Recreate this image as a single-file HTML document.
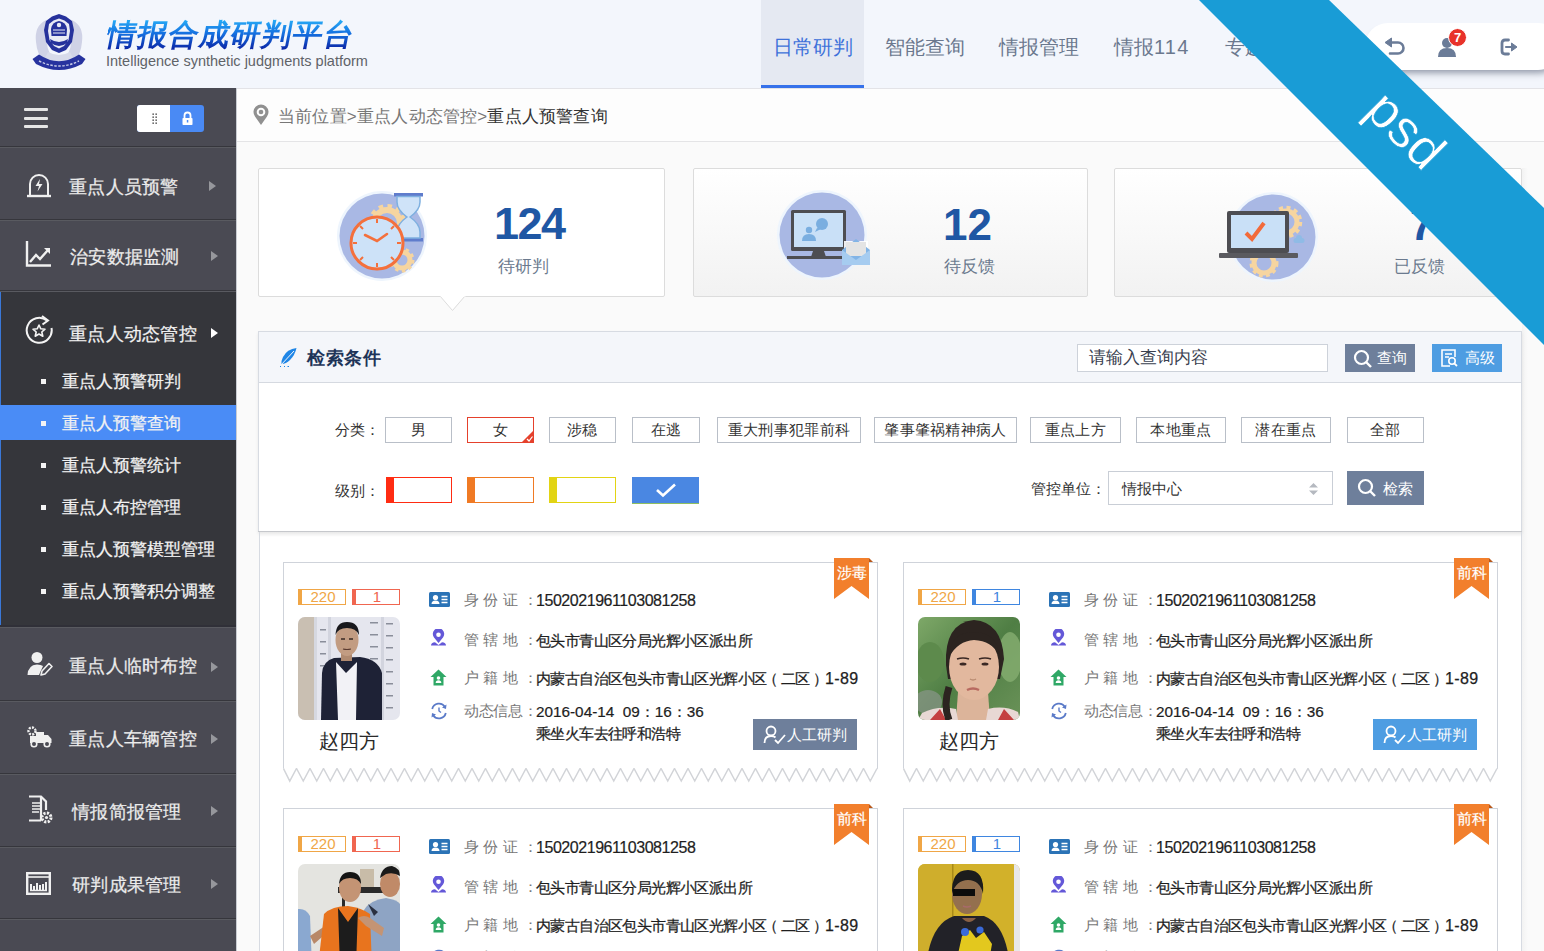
<!DOCTYPE html>
<html><head><meta charset="utf-8">
<style>
*{margin:0;padding:0;box-sizing:border-box}
html,body{width:1544px;height:951px;overflow:hidden;background:#fafafa;font-family:"Liberation Sans",sans-serif;position:relative}
.a{position:absolute}
.t{position:absolute;white-space:nowrap;line-height:20px}
/* header */
#hdr{left:0;top:0;width:1544px;height:89px;background:#f3f6fc;border-bottom:1px solid #e3e3e7}
.tab{position:absolute;top:0;height:88px}
.tabtxt{font-size:20px;color:#6b788e}
/* sidebar */
#side{left:0;top:88px;width:236px;height:863px;background:#4a4a53}
.sep{position:absolute;left:0;width:236px;height:2px;border-top:1px solid #36363c;border-bottom:1px solid #595a60}
.mtxt{font-size:18px;letter-spacing:0.3px;color:#ececec;-webkit-text-stroke:0.25px #ececec}
.stxt{font-size:17px;color:#f2f2f2;-webkit-text-stroke:0.25px #f2f2f2}
.arr{position:absolute;width:0;height:0;border-top:5.5px solid transparent;border-bottom:5.5px solid transparent;border-left:7px solid #96979c}
.bul{position:absolute;left:41px;width:5px;height:5px;background:#f4f4f4}
</style></head><body>

<!-- HEADER -->
<div id="hdr" class="a"></div>
<svg class="a" style="left:30px;top:12px" width="58" height="60" viewBox="0 0 58 60">
  <path d="M6 30 Q4 14 16 8 L20 20 Q14 30 20 42 L14 50 Q7 42 6 30 Z" fill="#cfd2e6"/>
  <path d="M52 30 Q54 14 42 8 L38 20 Q44 30 38 42 L44 50 Q51 42 52 30 Z" fill="#cfd2e6"/>
  <path d="M14 48 Q29 58 44 48 L40 40 Q29 46 18 40 Z" fill="#d8dbea"/>
  <path d="M29 2 L36 4.5 L42 9 L44 18 L42 30 L36 38 L29 41 L22 38 L16 30 L14 18 L16 9 L22 4.5 Z" fill="#26329c"/>
  <path d="M29 6.5 L34.5 8.5 L39 12 L40 19 L38.5 28 L34 34 L29 36.5 L24 34 L19.5 28 L18 19 L19 12 L23.5 8.5 Z" fill="#e9ebf5"/>
  <path d="M29 9 Q36 10 37 17 L36.5 24 L21.5 24 L21 17 Q22 10 29 9 Z" fill="#26329c"/>
  <circle cx="29" cy="13" r="2.2" fill="#e9ebf5"/>
  <path d="M23 18 H35 M23 21 H35" stroke="#e9ebf5" stroke-width="1"/>
  <path d="M20 27 Q29 33 38 27 L37 31 Q29 37 21 31 Z" fill="#26329c"/>
  <path d="M2.5 47 L9 42.5 Q29 56 49 42.5 L55.5 47 L52 52 Q29 64 6 52 Z" fill="#27339f"/>
  <path d="M9 49 Q29 59 49 49" stroke="#c5c9e6" stroke-width="1.4" fill="none" stroke-dasharray="2.5 1.5"/>
</svg>
<div class="t" style="left:104px;top:19px;font-size:30px;line-height:32px;font-weight:bold;transform:skewX(-11deg);transform-origin:0 100%;background:linear-gradient(#28b0f8 0%,#1570e0 45%,#0a1ea0 100%);-webkit-background-clip:text;background-clip:text;color:transparent;letter-spacing:1px">情报合成研判平台</div>
<div class="t" style="left:106px;top:52px;font-size:14.5px;line-height:18px;color:#5f6368">Intelligence synthetic judgments platform</div>

<div class="a" style="left:761px;top:0;width:103px;height:88px;background:#e5e9f2"></div>
<div class="a" style="left:761px;top:85px;width:103px;height:3px;background:#3671ea"></div>
<div class="t tabtxt" style="left:773px;top:37px;color:#3e72da">日常研判</div>
<div class="t tabtxt" style="left:885px;top:37px">智能查询</div>
<div class="t tabtxt" style="left:999px;top:37px">情报管理</div>
<div class="t tabtxt" style="left:1114px;top:37px">情报<span style="letter-spacing:1.2px">114</span></div>
<div class="t tabtxt" style="left:1225px;top:37px">专题研判</div>

<div class="a" style="left:1365px;top:23px;width:196px;height:46.5px;background:#fff;border-radius:23px;box-shadow:0 6px 7px -3px rgba(50,60,85,.5)"></div>
<svg class="a" style="left:1384px;top:37px" width="22" height="18" viewBox="0 0 22 18"><path d="M6 5.5 H14 A5.5 5.5 0 0 1 14 16.5 H6" stroke="#6b7c98" stroke-width="2.6" fill="none" stroke-linecap="round"/><path d="M1 5.5 L7.5 1 L7.5 10 Z" fill="#6b7c98" stroke="#6b7c98" stroke-width="1" stroke-linejoin="round"/></svg>
<svg class="a" style="left:1437px;top:36px" width="22" height="22" viewBox="0 0 22 22">
  <circle cx="10" cy="7" r="5" fill="#6b7c98"/>
  <path d="M1 21 Q1 12 10 12 Q19 12 19 21 Z" fill="#6b7c98"/>
</svg>
<div class="a" style="left:1448px;top:28px;width:19px;height:19px;border-radius:50%;background:#e8322a;border:1.5px solid #fff"></div>
<div class="t" style="left:1448px;top:28px;width:19px;font-size:13px;line-height:19px;text-align:center;color:#fff;font-weight:bold">7</div>
<svg class="a" style="left:1500px;top:38px" width="19" height="18" viewBox="0 0 19 18"><path d="M8.5 2 H5 Q2 2 2 5 V13 Q2 16 5 16 H8.5" stroke="#6b7c98" stroke-width="2.8" fill="none" stroke-linecap="round"/><path d="M6 9 H13" stroke="#6b7c98" stroke-width="2.2" stroke-linecap="round"/><path d="M11.5 5 L17 9 L11.5 13 Z" fill="#6b7c98" stroke="#6b7c98" stroke-width="1" stroke-linejoin="round"/></svg>

<!-- SIDEBAR -->
<div id="side" class="a"></div>
<div class="a" style="left:236px;top:88px;width:1px;height:863px;background:#c9ccd2"></div>
<div class="a" style="left:24px;top:108px;width:24px;height:3px;background:#e6e6e6;border-radius:1px"></div>
<div class="a" style="left:24px;top:117px;width:24px;height:3px;background:#e6e6e6;border-radius:1px"></div>
<div class="a" style="left:24px;top:125px;width:24px;height:3px;background:#e6e6e6;border-radius:1px"></div>
<div class="a" style="left:137px;top:105px;width:67px;height:27px;border-radius:3px;background:#4a8af4;overflow:hidden"><div style="width:33px;height:27px;background:#fff"></div></div>
<svg class="a" style="left:152px;top:113px" width="6" height="12" viewBox="0 0 6 12"><g fill="#222"><rect x="0.5" y="0.5" width="1.3" height="1.3"/><rect x="3.5" y="0.5" width="1.3" height="1.3"/><rect x="0.5" y="3.5" width="1.3" height="1.3"/><rect x="3.5" y="3.5" width="1.3" height="1.3"/><rect x="0.5" y="6.5" width="1.3" height="1.3"/><rect x="3.5" y="6.5" width="1.3" height="1.3"/><rect x="0.5" y="9.5" width="1.3" height="1.3"/><rect x="3.5" y="9.5" width="1.3" height="1.3"/></g></svg>
<svg class="a" style="left:181px;top:111px" width="13" height="15" viewBox="0 0 13 15"><path d="M3.5 7 V4.5 A3 3 0 0 1 9.5 4.5 V7" stroke="#fff" stroke-width="1.8" fill="none"/><rect x="1.5" y="7" width="10" height="7" rx="0.8" fill="#fff"/><rect x="5.8" y="9" width="1.5" height="2.5" fill="#4a8af4"/></svg>

<div class="sep" style="top:146px"></div>
<svg class="a" style="left:25px;top:172px" width="28" height="26" viewBox="0 0 28 26"><path d="M5 23 V12 A9 9 0 0 1 23 12 V23" stroke="#f0f0f0" stroke-width="2" fill="none"/><path d="M2 24 H26" stroke="#f0f0f0" stroke-width="2.4"/><path d="M15 7 L10.5 14 H14 L12.5 19.5 L17.5 12 H14 Z" fill="#f0f0f0"/></svg>
<div class="t mtxt" style="left:69px;top:177px">重点人员预警</div>
<div class="arr" style="left:209px;top:181px"></div>

<div class="sep" style="top:219px"></div>
<svg class="a" style="left:25px;top:240px" width="28" height="27" viewBox="0 0 28 27"><path d="M2 1 V25.5 H26" stroke="#f0f0f0" stroke-width="2.4" fill="none"/><path d="M5 22 L11 15 L15 19 L23 10" stroke="#f0f0f0" stroke-width="2.4" fill="none"/><path d="M19 8 L25 8 L25 14 Z" fill="#f0f0f0"/></svg>
<div class="t mtxt" style="left:70px;top:247px">治安数据监测</div>
<div class="arr" style="left:211px;top:251px"></div>

<div class="sep" style="top:290px"></div>
<div class="a" style="left:0;top:292px;width:236px;height:334px;background:#35363b"></div>
<div class="a" style="left:0;top:292px;width:1px;height:334px;background:#3a78d8"></div>
<svg class="a" style="left:25px;top:314px" width="30" height="31" viewBox="0 0 30 31"><path d="M22 6.5 A12.5 12.5 0 1 0 26.5 14" stroke="#f4f4f4" stroke-width="2" fill="none"/><path d="M17 2 L23 6.5 L17.5 10.5" stroke="#f4f4f4" stroke-width="2" fill="none"/><path d="M14 11 L15.8 14.8 L20 15.2 L16.8 18 L17.8 22.2 L14 20 L10.2 22.2 L11.2 18 L8 15.2 L12.2 14.8 Z" stroke="#f4f4f4" stroke-width="1.6" fill="none" stroke-linejoin="round"/></svg>
<div class="t mtxt" style="left:69px;top:324px;color:#f4f4f4">重点人动态管控</div>
<div class="arr" style="left:211px;top:328px;border-left-color:#fff"></div>

<div class="bul" style="top:379px"></div>
<div class="t stxt" style="left:62px;top:372px">重点人预警研判</div>
<div class="a" style="left:0;top:405px;width:236px;height:35px;background:#4a8cf6"></div>
<div class="bul" style="top:421px"></div>
<div class="t stxt" style="left:62px;top:414px">重点人预警查询</div>
<div class="bul" style="top:463px"></div>
<div class="t stxt" style="left:62px;top:456px">重点人预警统计</div>
<div class="bul" style="top:505px"></div>
<div class="t stxt" style="left:62px;top:498px">重点人布控管理</div>
<div class="bul" style="top:547px"></div>
<div class="t stxt" style="left:62px;top:540px">重点人预警模型管理</div>
<div class="bul" style="top:589px"></div>
<div class="t stxt" style="left:62px;top:582px">重点人预警积分调整</div>

<div class="sep" style="top:625px;height:3px;border-top:2px solid #303038"></div>
<svg class="a" style="left:27px;top:651px" width="26" height="26" viewBox="0 0 26 26"><circle cx="10" cy="6.5" r="5.5" fill="#f0f0f0"/><path d="M0.5 24 Q1 14 10 13.5 Q14 13.5 16 15 L12 24 Z" fill="#f0f0f0"/><path d="M14 24 L15 20 L22 12.5 L25 15.5 L18 23 Z" stroke="#f0f0f0" stroke-width="1.6" fill="none" stroke-linejoin="round"/></svg>
<div class="t mtxt" style="left:69px;top:656px">重点人临时布控</div>
<div class="arr" style="left:211px;top:662px"></div>

<div class="sep" style="top:700px"></div>
<svg class="a" style="left:27px;top:726px" width="26" height="22" viewBox="0 0 26 22"><circle cx="5" cy="5" r="3.5" stroke="#f0f0f0" stroke-width="2.4" fill="none" stroke-dasharray="2 1.2"/><path d="M9 6 H17 V17 H3 V10 H9 Z" fill="#f0f0f0"/><path d="M17 9 H21 L24.5 13 V17 H17 Z" fill="#f0f0f0"/><circle cx="7" cy="18" r="2.8" fill="#4a4a53" stroke="#f0f0f0" stroke-width="1.6"/><circle cx="20" cy="18" r="2.8" fill="#4a4a53" stroke="#f0f0f0" stroke-width="1.6"/></svg>
<div class="t mtxt" style="left:69px;top:729px">重点人车辆管控</div>
<div class="arr" style="left:211px;top:734px"></div>

<div class="sep" style="top:773px"></div>
<svg class="a" style="left:27px;top:795px" width="27" height="30" viewBox="0 0 27 30"><path d="M2 1.5 H14 L19 6.5 V15 M14 25.5 H2 Z V1.5" stroke="#f0f0f0" stroke-width="2.2" fill="none"/><path d="M5 8 H15 M5 11 H15 M5 14 H15 M5 17 H12" stroke="#f0f0f0" stroke-width="1.4"/><circle cx="19.5" cy="22.5" r="4.5" stroke="#f0f0f0" stroke-width="3" fill="none" stroke-dasharray="2.2 1.3"/><circle cx="19.5" cy="22.5" r="1.6" fill="#f0f0f0"/></svg>
<div class="t mtxt" style="left:72px;top:802px">情报简报管理</div>
<div class="arr" style="left:211px;top:806px"></div>

<div class="sep" style="top:846px"></div>
<svg class="a" style="left:26px;top:872px" width="25" height="23" viewBox="0 0 25 23"><rect x="1.2" y="1.2" width="22.6" height="20.6" stroke="#f0f0f0" stroke-width="2.4" fill="none"/><path d="M1 5 H24" stroke="#f0f0f0" stroke-width="1.6"/><path d="M5 18 V12 M8 18 V14 M11 18 V11 M14 18 V13 M17 18 V12 M20 18 V10" stroke="#f0f0f0" stroke-width="2"/><path d="M4 18.5 H21" stroke="#f0f0f0" stroke-width="1.5"/></svg>
<div class="t mtxt" style="left:72px;top:875px">研判成果管理</div>
<div class="arr" style="left:211px;top:879px"></div>
<div class="sep" style="top:918px"></div>


<!-- CONTENT -->
<div class="a" style="left:237px;top:89px;width:1307px;height:53px;background:#fdfdfd;border-bottom:1px solid #e4e4e6"></div>
<svg class="a" style="left:252px;top:104px" width="18" height="22" viewBox="0 0 18 22"><path d="M9 21 L3 12.5 A7.5 7.5 0 1 1 15 12.5 Z" fill="#909090"/><circle cx="9" cy="8" r="4.3" fill="#fdfdfd"/><circle cx="9" cy="8" r="2.3" fill="#909090"/></svg>
<div class="t" style="left:278px;top:107px;font-size:17px;color:#777;letter-spacing:0.2px">当前位置&gt;重点人动态管控&gt;<span style="color:#333">重点人预警查询</span></div>

<!-- stat cards -->
<div class="a" style="left:258px;top:168px;width:407px;height:129px;background:#fff;border:1px solid #dcdcdc;border-radius:2px"></div>
<svg class="a" style="left:440px;top:295px" width="26" height="17" viewBox="0 0 26 17"><path d="M0 1 L12.5 15.5 L25 1" fill="#fff" stroke="#dcdcdc" stroke-width="1"/><rect x="0.5" y="0" width="25" height="1.6" fill="#fff"/></svg>
<div class="a" style="left:693px;top:168px;width:395px;height:129px;background:linear-gradient(#fff,#f2f2f2);border:1px solid #dcdcdc;border-radius:2px"></div>
<div class="a" style="left:1114px;top:168px;width:408px;height:129px;background:linear-gradient(#fff,#f2f2f2);border:1px solid #dcdcdc;border-radius:2px"></div>

<!-- icon 1: clock -->
<svg class="a" style="left:334px;top:188px" width="96" height="96" viewBox="0 0 96 96">
  <circle cx="48" cy="48" r="45" fill="#eef5fd"/>
  <circle cx="48" cy="48" r="42.5" fill="#a9b8e4"/>
  <circle cx="53" cy="35" r="13" fill="none" stroke="#f6d5a0" stroke-width="6"/>
  <circle cx="53" cy="35" r="17" fill="none" stroke="#f6d5a0" stroke-width="4" stroke-dasharray="4.5 4.4"/>
  <circle cx="68" cy="72" r="8" fill="none" stroke="#f6d5a0" stroke-width="5"/>
  <circle cx="68" cy="72" r="11" fill="none" stroke="#f6d5a0" stroke-width="3" stroke-dasharray="3.5 3.4"/>
  <rect x="60" y="5" width="29" height="3.5" fill="#5f7ccc"/>
  <rect x="60" y="50" width="29" height="3.5" fill="#5f7ccc"/>
  <path d="M63 8.5 H86 V14 Q86 22 76 29 Q86 36 86 44 V50 H63 V44 Q63 36 73 29 Q63 22 63 14 Z" fill="#cfe3f8" stroke="#7fb0e0" stroke-width="1.5"/>
  <circle cx="43" cy="55" r="26" fill="#cde2f8" stroke="#f4703c" stroke-width="3"/>
  <g stroke="#f4703c" stroke-width="2">
    <path d="M43 31 V35 M43 75 V79 M19 55 H23 M63 55 H67 M26 38 L29 41 M60 38 L57 41 M26 72 L29 69 M60 72 L57 69"/>
  </g>
  <path d="M31 47 L43 53 L53 46" stroke="#f4703c" stroke-width="2.6" fill="none" stroke-linecap="round"/>
</svg>
<div class="t" style="left:494px;top:202px;font-size:45px;line-height:44px;font-weight:bold;color:#1f57a4;letter-spacing:-1.5px">124</div>
<div class="t" style="left:498px;top:257px;font-size:17px;color:#6b7a8e">待研判</div>

<!-- icon 2: monitor -->
<svg class="a" style="left:776px;top:189px" width="100" height="94" viewBox="0 0 100 94">
  <circle cx="46" cy="46" r="45" fill="#eef5fd"/>
  <circle cx="46" cy="46" r="42.5" fill="#a9b8e4"/>
  <rect x="15" y="21" width="55" height="41" rx="1.5" fill="#4d4d52"/>
  <rect x="18" y="24" width="49" height="34" fill="#c9e0f7"/>
  <path d="M37 62 H48 L50 68 H35 Z" fill="#4d4d52"/>
  <rect x="11" y="67" width="60" height="3" fill="#4d4d52"/>
  <circle cx="46" cy="35" r="6" fill="#7aaee0"/>
  <path d="M41 39 L39 43 L45 40 Z" fill="#7aaee0"/>
  <circle cx="33" cy="41" r="3.2" fill="#7aaee0"/>
  <path d="M26 52 Q26 45 33 45 Q40 45 40 52 Z" fill="#7aaee0"/>
  <rect x="68" y="52" width="24" height="24" fill="#fff" opacity=".9"/>
  <path d="M66 61 L80 50 L94 61 V76 H66 Z" fill="#82b4e6"/>
  <rect x="70" y="53" width="20" height="14" fill="#e4e4e4"/>
  <path d="M66 61 L80 71 L94 61 V76 H66 Z" fill="#a6ccf0"/>
</svg>
<div class="t" style="left:943px;top:203px;font-size:44px;line-height:44px;font-weight:bold;color:#1f57a4">12</div>
<div class="t" style="left:944px;top:257px;font-size:17px;color:#6b7a8e">待反馈</div>

<!-- icon 3: laptop -->
<svg class="a" style="left:1216px;top:191px" width="104" height="94" viewBox="0 0 104 94">
  <circle cx="57" cy="46" r="45" fill="#eef5fd"/>
  <circle cx="57" cy="46" r="42.5" fill="#a9b8e4"/>
  <circle cx="70" cy="31" r="11" fill="none" stroke="#f6d5a0" stroke-width="5"/>
  <circle cx="70" cy="31" r="14.5" fill="none" stroke="#f6d5a0" stroke-width="3.5" stroke-dasharray="4 3.6"/>
  <circle cx="48" cy="72" r="10" fill="none" stroke="#f6d5a0" stroke-width="5"/>
  <circle cx="48" cy="72" r="13" fill="none" stroke="#f6d5a0" stroke-width="3" stroke-dasharray="3.8 3.4"/>
  <rect x="11" y="20" width="62" height="42" rx="2" fill="#4d4d52"/>
  <rect x="15" y="24" width="54" height="33" fill="#c9e0f7"/>
  <rect x="3" y="62" width="79" height="5" rx="1" fill="#5a5a5f"/>
  <path d="M30 42 L36 48 L48 32" stroke="#f26a3a" stroke-width="4" fill="none"/>
  <path d="M80 47 a3 3 0 0 1 6 0 a2.5 2.5 0 0 1 0 5 h-6 a2.5 2.5 0 0 1 0 -5z" fill="#8fbbe6"/>
</svg>
<div class="t" style="left:1410px;top:203px;font-size:44px;line-height:44px;font-weight:bold;color:#1f57a4">7</div>
<div class="t" style="left:1394px;top:257px;font-size:17px;color:#6b7a8e">已反馈</div>


<!-- search panel -->
<div class="a" style="left:258px;top:331px;width:1264px;height:201px;background:#fff;border:1px solid #d7dbe2;box-shadow:0 2px 3px rgba(0,0,0,.08)"></div>
<div class="a" style="left:259px;top:332px;width:1262px;height:51px;background:#f4f6fa;border-bottom:1px solid #d5d9e0"></div>
<svg class="a" style="left:278px;top:347px" width="20" height="21" viewBox="0 0 20 21"><path d="M18.5 1 Q9 2 5 10 Q3 14 3.5 17 Q8 17 12 13 Q17 8 18.5 1 Z" fill="#1f86e6"/><path d="M16 4 L2.5 18.5" stroke="#f4f6fa" stroke-width="1"/><path d="M2 19.5 L3 19.5 M6 19.5 L7 19.5 M9.5 19.5 L11 19.5" stroke="#1f86e6" stroke-width="1"/></svg>
<div class="t" style="left:307px;top:348px;font-size:18px;font-weight:bold;color:#1e3458;letter-spacing:0.6px">检索条件</div>
<div class="a" style="left:1077px;top:344px;width:251px;height:28px;background:#fff;border:1px solid #cdd2da"></div>
<div class="t" style="left:1089px;top:348px;font-size:17px;color:#3a4150">请输入查询内容</div>
<div class="a" style="left:1345px;top:344px;width:70px;height:28px;background:#6e7f9b"></div>
<svg class="a" style="left:1353px;top:349px" width="20" height="20" viewBox="0 0 20 20"><circle cx="8.5" cy="8.5" r="6.5" stroke="#fff" stroke-width="2.2" fill="none"/><path d="M13 13 L18 18" stroke="#fff" stroke-width="2.4"/></svg>
<div class="t" style="left:1377px;top:348px;font-size:15px;color:#fff">查询</div>
<div class="a" style="left:1432px;top:344px;width:70px;height:28px;background:#4e9de2"></div>
<svg class="a" style="left:1440px;top:348px" width="19" height="20" viewBox="0 0 19 20"><path d="M10 18 H2 V2 H15 V9" stroke="#fff" stroke-width="1.6" fill="none"/><path d="M5 6 H12 M5 9 H9" stroke="#fff" stroke-width="1.4"/><circle cx="12" cy="13" r="3.2" stroke="#fff" stroke-width="1.6" fill="none"/><path d="M14.3 15.3 L17 18" stroke="#fff" stroke-width="1.8"/></svg>
<div class="t" style="left:1465px;top:348px;font-size:15px;color:#fff">高级</div>

<div class="t" style="left:335px;top:420px;font-size:15px;color:#333">分类：</div>
<div class="t" style="left:335px;top:481px;font-size:15px;color:#333">级别：</div>
<div class="a" style="left:385px;top:417px;width:67px;height:26px;border:1px solid #b9bfc8;background:#fff"></div>
<div class="t" style="left:385px;top:420px;width:67px;text-align:center;font-size:15px;color:#333;letter-spacing:0.3px">男</div>
<div class="a" style="left:467px;top:417px;width:67px;height:26px;border:1px solid #e5412c;background:#fff"></div>
<div class="t" style="left:467px;top:420px;width:67px;text-align:center;font-size:15px;color:#333;letter-spacing:0.3px">女</div>
<div class="a" style="left:549px;top:417px;width:67px;height:26px;border:1px solid #b9bfc8;background:#fff"></div>
<div class="t" style="left:549px;top:420px;width:67px;text-align:center;font-size:15px;color:#333;letter-spacing:0.3px">涉稳</div>
<div class="a" style="left:632px;top:417px;width:68px;height:26px;border:1px solid #b9bfc8;background:#fff"></div>
<div class="t" style="left:632px;top:420px;width:68px;text-align:center;font-size:15px;color:#333;letter-spacing:0.3px">在逃</div>
<div class="a" style="left:717px;top:417px;width:144px;height:26px;border:1px solid #b9bfc8;background:#fff"></div>
<div class="t" style="left:717px;top:420px;width:144px;text-align:center;font-size:15px;color:#333;letter-spacing:0.3px">重大刑事犯罪前科</div>
<div class="a" style="left:874px;top:417px;width:143px;height:26px;border:1px solid #b9bfc8;background:#fff"></div>
<div class="t" style="left:874px;top:420px;width:143px;text-align:center;font-size:15px;color:#333;letter-spacing:0.3px">肇事肇祸精神病人</div>
<div class="a" style="left:1030px;top:417px;width:91px;height:26px;border:1px solid #b9bfc8;background:#fff"></div>
<div class="t" style="left:1030px;top:420px;width:91px;text-align:center;font-size:15px;color:#333;letter-spacing:0.3px">重点上方</div>
<div class="a" style="left:1136px;top:417px;width:90px;height:26px;border:1px solid #b9bfc8;background:#fff"></div>
<div class="t" style="left:1136px;top:420px;width:90px;text-align:center;font-size:15px;color:#333;letter-spacing:0.3px">本地重点</div>
<div class="a" style="left:1241px;top:417px;width:90px;height:26px;border:1px solid #b9bfc8;background:#fff"></div>
<div class="t" style="left:1241px;top:420px;width:90px;text-align:center;font-size:15px;color:#333;letter-spacing:0.3px">潜在重点</div>
<div class="a" style="left:1347px;top:417px;width:77px;height:26px;border:1px solid #b9bfc8;background:#fff"></div>
<div class="t" style="left:1347px;top:420px;width:77px;text-align:center;font-size:15px;color:#333;letter-spacing:0.3px">全部</div>
<svg class="a" style="left:521px;top:430px" width="13" height="13" viewBox="0 0 13 13"><path d="M13 0 V13 H0 Z" fill="#e5412c"/><path d="M6 9 L8 11 L11.5 6.5" stroke="#fff" stroke-width="1.2" fill="none"/></svg>
<div class="a" style="left:386px;top:477px;width:66px;height:26px;border:1.5px solid #ff2c12;border-left:8px solid #ff2c12;background:#fff"></div>
<div class="a" style="left:467px;top:477px;width:67px;height:26px;border:1.5px solid #f07a24;border-left:8px solid #f07a24;background:#fff"></div>
<div class="a" style="left:549px;top:477px;width:67px;height:26px;border:1.5px solid #e2d414;border-left:8px solid #e2d414;background:#fff"></div>
<div class="a" style="left:632px;top:477px;width:67px;height:27px;background:#4a87e2;border-bottom:1px solid #8fbf60"></div>
<svg class="a" style="left:654px;top:481px" width="24" height="18" viewBox="0 0 24 18"><path d="M3 9 L9 14.5 L21 3.5" stroke="#fff" stroke-width="2.6" fill="none"/></svg>

<div class="t" style="left:1031px;top:479px;font-size:15px;color:#333">管控单位：</div>
<div class="a" style="left:1108px;top:471px;width:225px;height:34px;border:1px solid #c9ced6;background:#fff"></div>
<div class="t" style="left:1122px;top:479px;font-size:15px;color:#333">情报中心</div>
<svg class="a" style="left:1308px;top:482px" width="11" height="14" viewBox="0 0 11 14"><path d="M5.5 1 L10 5.5 H1 Z M5.5 13 L10 8.5 H1 Z" fill="#b5b9c0"/></svg>
<div class="a" style="left:1347px;top:471px;width:77px;height:34px;background:#6e7f9b"></div>
<svg class="a" style="left:1357px;top:478px" width="20" height="20" viewBox="0 0 20 20"><circle cx="8.5" cy="8.5" r="6.5" stroke="#fff" stroke-width="2.2" fill="none"/><path d="M13 13 L18 18" stroke="#fff" stroke-width="2.4"/></svg>
<div class="t" style="left:1383px;top:479px;font-size:15px;color:#fff">检索</div>

<!-- result container -->
<div class="a" style="left:259px;top:532px;width:1263px;height:430px;background:#fff;border-left:1px solid #d7dbe2;border-right:1px solid #d7dbe2"></div>
<div class="a" style="left:258px;top:531px;width:1264px;height:1px;background:#c6c8cc"></div>
<div class="a" style="left:260px;top:532px;width:1261px;height:5px;background:linear-gradient(rgba(0,0,0,.09),rgba(0,0,0,0))"></div>
<div class="a" style="left:1522px;top:168px;width:6px;height:783px;background:linear-gradient(90deg,rgba(0,0,0,.03),rgba(0,0,0,0))"></div>


<!-- person cards -->
<div class="a" style="left:283px;top:562px;width:595px;height:207px;background:#fff;border:1px solid #cfd3da;border-bottom:none"></div>
<svg class="a" style="left:283px;top:768px" width="596" height="15" viewBox="0 0 596 15"><polygon points="0.5,0 0.5,0.5 6.75,13 13.50,0.5 20.25,13 27.00,0.5 33.75,13 40.50,0.5 47.25,13 54.00,0.5 60.75,13 67.50,0.5 74.25,13 81.00,0.5 87.75,13 94.50,0.5 101.25,13 108.00,0.5 114.75,13 121.50,0.5 128.25,13 135.00,0.5 141.75,13 148.50,0.5 155.25,13 162.00,0.5 168.75,13 175.50,0.5 182.25,13 189.00,0.5 195.75,13 202.50,0.5 209.25,13 216.00,0.5 222.75,13 229.50,0.5 236.25,13 243.00,0.5 249.75,13 256.50,0.5 263.25,13 270.00,0.5 276.75,13 283.50,0.5 290.25,13 297.00,0.5 303.75,13 310.50,0.5 317.25,13 324.00,0.5 330.75,13 337.50,0.5 344.25,13 351.00,0.5 357.75,13 364.50,0.5 371.25,13 378.00,0.5 384.75,13 391.50,0.5 398.25,13 405.00,0.5 411.75,13 418.50,0.5 425.25,13 432.00,0.5 438.75,13 445.50,0.5 452.25,13 459.00,0.5 465.75,13 472.50,0.5 479.25,13 486.00,0.5 492.75,13 499.50,0.5 506.25,13 513.00,0.5 519.75,13 526.50,0.5 533.25,13 540.00,0.5 546.75,13 553.50,0.5 560.25,13 567.00,0.5 573.75,13 580.50,0.5 587.25,13 594.00,0.5 594.5,0" fill="#fff"/><polyline points="0.5,0.5 6.75,13 13.50,0.5 20.25,13 27.00,0.5 33.75,13 40.50,0.5 47.25,13 54.00,0.5 60.75,13 67.50,0.5 74.25,13 81.00,0.5 87.75,13 94.50,0.5 101.25,13 108.00,0.5 114.75,13 121.50,0.5 128.25,13 135.00,0.5 141.75,13 148.50,0.5 155.25,13 162.00,0.5 168.75,13 175.50,0.5 182.25,13 189.00,0.5 195.75,13 202.50,0.5 209.25,13 216.00,0.5 222.75,13 229.50,0.5 236.25,13 243.00,0.5 249.75,13 256.50,0.5 263.25,13 270.00,0.5 276.75,13 283.50,0.5 290.25,13 297.00,0.5 303.75,13 310.50,0.5 317.25,13 324.00,0.5 330.75,13 337.50,0.5 344.25,13 351.00,0.5 357.75,13 364.50,0.5 371.25,13 378.00,0.5 384.75,13 391.50,0.5 398.25,13 405.00,0.5 411.75,13 418.50,0.5 425.25,13 432.00,0.5 438.75,13 445.50,0.5 452.25,13 459.00,0.5 465.75,13 472.50,0.5 479.25,13 486.00,0.5 492.75,13 499.50,0.5 506.25,13 513.00,0.5 519.75,13 526.50,0.5 533.25,13 540.00,0.5 546.75,13 553.50,0.5 560.25,13 567.00,0.5 573.75,13 580.50,0.5 587.25,13 594.00,0.5" fill="none" stroke="#d2d4d8" stroke-width="1.5"/></svg>
<svg class="a" style="left:834px;top:558px" width="40" height="42" viewBox="0 0 40 42"><path d="M35 0 L39 4 H35 Z" fill="#b8581a"/><path d="M0 0 H35 V41 L17.5 28 L0 41 Z" fill="#f27f2c"/></svg>
<div class="t" style="left:834px;top:563px;width:35px;text-align:center;font-size:15px;color:#fff;-webkit-text-stroke:0.2px #fff">涉毒</div>
<div class="a" style="left:298px;top:589px;width:48px;height:16px;border:1px solid #f0a646;border-left:4px solid #f0a646;background:#fff"></div>
<div class="t" style="left:300px;top:587px;width:46px;text-align:center;font-size:15px;color:#f0a646;line-height:20px">220</div>
<div class="a" style="left:352px;top:589px;width:48px;height:16px;border:1px solid #f06650;border-left:4px solid #f06650;background:#fff"></div>
<div class="t" style="left:354px;top:587px;width:46px;text-align:center;font-size:15px;color:#f06650;line-height:20px">1</div>
<div class="a" style="left:298px;top:617px;width:102px;height:103px;border-radius:7px;overflow:hidden"><svg width="102" height="103" viewBox="0 0 102 103"><rect width="102" height="103" fill="#e5e6ee"/><rect width="16" height="103" fill="#c9bfb2"/><rect x="16" width="3" height="103" fill="#d6d8e0"/><rect x="30" width="3" height="103" fill="#d2d4de"/><rect x="83" width="3" height="103" fill="#d2d4de"/><g fill="#8a8e9a"><rect x="22" y="12" width="6" height="1.5"/><rect x="22" y="24" width="6" height="1.5"/><rect x="22" y="36" width="6" height="1.5"/><rect x="22" y="48" width="6" height="1.5"/><rect x="88" y="6" width="7" height="1.5"/><rect x="88" y="18" width="7" height="1.5"/><rect x="88" y="30" width="7" height="1.5"/><rect x="88" y="42" width="7" height="1.5"/><rect x="88" y="54" width="7" height="1.5"/><rect x="88" y="66" width="7" height="1.5"/><rect x="88" y="78" width="7" height="1.5"/><rect x="88" y="90" width="7" height="1.5"/><rect x="72" y="5" width="8" height="1.5"/><rect x="72" y="17" width="8" height="1.5"/><rect x="72" y="29" width="8" height="1.5"/><rect x="72" y="41" width="8" height="1.5"/></g><path d="M23 103 L24 56 Q25 44 36 41 L62 40 Q80 42 84 56 L84 103 Z" fill="#1e2236"/><path d="M38 45 L48 56 L59 45 L58 103 H40 Z" fill="#f2f2f6"/><rect x="43" y="32" width="11" height="12" fill="#b08a70"/><ellipse cx="49" cy="23" rx="11.5" ry="16" fill="#c29c82"/><path d="M37.5 18 Q38 5 49 5 Q61 5 61 18 Q58 11 49 11 Q40 11 37.5 18 Z" fill="#18181c"/><path d="M43 22 H47 M51 22 H55" stroke="#3a2a24" stroke-width="1.4"/><path d="M45 32 Q49 33 53 32" stroke="#5a3a30" stroke-width="1.2" fill="none"/></svg></div>
<div class="t" style="left:298px;top:729px;width:102px;text-align:center;font-size:20px;line-height:24px;color:#2a2a2a">赵四方</div>
<svg class="a" style="left:429px;top:592px" width="21" height="15" viewBox="0 0 21 15"><rect width="21" height="15" rx="1.5" fill="#2b73b6"/><circle cx="6.5" cy="5.5" r="2.6" fill="#fff"/><path d="M2.5 12 Q2.5 8.5 6.5 8.5 Q10.5 8.5 10.5 12 Z" fill="#fff"/><path d="M12.5 4.5 H18.5 M12.5 7.5 H18.5 M12.5 10.5 H18.5" stroke="#fff" stroke-width="1.4"/></svg>
<svg class="a" style="left:430px;top:629px" width="17" height="18" viewBox="0 0 17 18"><path d="M8.5 14 L4 8.5 A5.7 5.7 0 1 1 13 8.5 Z" fill="#6458d8"/><circle cx="8.5" cy="5.8" r="2.3" fill="#fff"/><path d="M1 16.5 Q1 13.5 5 13.2 L8.5 16 L12 13.2 Q16 13.5 16 16.5 Z" fill="#6458d8"/></svg>
<svg class="a" style="left:430px;top:669px" width="17" height="17" viewBox="0 0 17 17"><path d="M8.5 0.5 L16.5 8 H13.5 V16.5 H3.5 V8 H0.5 Z" fill="#2fa866"/><circle cx="8.5" cy="9" r="1.8" fill="#fff"/><path d="M5.7 14 Q5.7 11.3 8.5 11.3 Q11.3 11.3 11.3 14 Z" fill="#fff"/></svg>
<svg class="a" style="left:430px;top:702px" width="18" height="18" viewBox="0 0 18 18"><path d="M2.2 7 A7 7 0 0 1 15 5" stroke="#5a7ac8" stroke-width="1.8" fill="none"/><path d="M15.8 11 A7 7 0 0 1 3 13" stroke="#5a7ac8" stroke-width="1.8" fill="none"/><path d="M16.5 2.5 L16 7 L12 5.5 Z M1.5 15.5 L2 11 L6 12.5 Z" fill="#5a7ac8"/><path d="M9 5.5 V9 L11 10.5" stroke="#5a7ac8" stroke-width="1.4" fill="none"/></svg>
<div class="t" style="left:464px;top:590px;font-size:15px;color:#777;letter-spacing:4.3px">身份证</div>
<div class="t" style="left:464px;top:630px;font-size:15px;color:#777;letter-spacing:4.3px">管辖地</div>
<div class="t" style="left:464px;top:668px;font-size:15px;color:#777;letter-spacing:4.3px">户籍地</div>
<div class="t" style="left:464px;top:701px;font-size:15px;color:#777;letter-spacing:-0.3px">动态信息</div>
<div class="t" style="left:523px;top:590px;font-size:15px;color:#777">：</div>
<div class="t" style="left:523px;top:630px;font-size:15px;color:#777">：</div>
<div class="t" style="left:523px;top:668px;font-size:15px;color:#777">：</div>
<div class="t" style="left:523px;top:701px;font-size:15px;color:#777">：</div>
<div class="t" style="left:536px;top:591px;font-size:16px;letter-spacing:-0.45px;color:#1e1e1e;-webkit-text-stroke:0.2px #1e1e1e">1502021961103081258</div>
<div class="t" style="left:536px;top:631px;font-size:15px;letter-spacing:-0.6px;color:#1e1e1e;-webkit-text-stroke:0.25px #1e1e1e">包头市青山区分局光辉小区派出所</div>
<div class="t" style="left:536px;top:669px;font-size:15px;letter-spacing:-0.6px;color:#1e1e1e;-webkit-text-stroke:0.25px #1e1e1e">内蒙古自治区包头市青山区光辉小区<span style="margin-left:-3px;margin-right:3px">（</span>二区<span style="margin-left:3px;margin-right:-2px">）</span><span style="font-size:16px;letter-spacing:0.4px">1-89</span></div>
<div class="t" style="left:536px;top:702px;font-size:15.3px;color:#1e1e1e;white-space:pre;-webkit-text-stroke:0.2px #1e1e1e">2016-04-14  09：16：36</div>
<div class="t" style="left:536px;top:724px;font-size:15px;letter-spacing:-0.6px;color:#1e1e1e;-webkit-text-stroke:0.25px #1e1e1e">乘坐火车去往呼和浩特</div>
<div class="a" style="left:753px;top:719px;width:104px;height:31px;background:#6e7f9b"></div>
<svg class="a" style="left:763px;top:725px" width="24" height="20" viewBox="0 0 24 20"><circle cx="8" cy="6" r="4.5" stroke="#fff" stroke-width="1.8" fill="none"/><path d="M1.5 18 Q1.5 11 8 11 Q11 11 12.5 12.5" stroke="#fff" stroke-width="1.8" fill="none"/><path d="M12 15 L15 18 L22 10" stroke="#fff" stroke-width="1.8" fill="none"/></svg>
<div class="t" style="left:787px;top:725px;font-size:15px;color:#fff">人工研判</div>
<div class="a" style="left:903px;top:562px;width:595px;height:207px;background:#fff;border:1px solid #cfd3da;border-bottom:none"></div>
<svg class="a" style="left:903px;top:768px" width="596" height="15" viewBox="0 0 596 15"><polygon points="0.5,0 0.5,0.5 6.75,13 13.50,0.5 20.25,13 27.00,0.5 33.75,13 40.50,0.5 47.25,13 54.00,0.5 60.75,13 67.50,0.5 74.25,13 81.00,0.5 87.75,13 94.50,0.5 101.25,13 108.00,0.5 114.75,13 121.50,0.5 128.25,13 135.00,0.5 141.75,13 148.50,0.5 155.25,13 162.00,0.5 168.75,13 175.50,0.5 182.25,13 189.00,0.5 195.75,13 202.50,0.5 209.25,13 216.00,0.5 222.75,13 229.50,0.5 236.25,13 243.00,0.5 249.75,13 256.50,0.5 263.25,13 270.00,0.5 276.75,13 283.50,0.5 290.25,13 297.00,0.5 303.75,13 310.50,0.5 317.25,13 324.00,0.5 330.75,13 337.50,0.5 344.25,13 351.00,0.5 357.75,13 364.50,0.5 371.25,13 378.00,0.5 384.75,13 391.50,0.5 398.25,13 405.00,0.5 411.75,13 418.50,0.5 425.25,13 432.00,0.5 438.75,13 445.50,0.5 452.25,13 459.00,0.5 465.75,13 472.50,0.5 479.25,13 486.00,0.5 492.75,13 499.50,0.5 506.25,13 513.00,0.5 519.75,13 526.50,0.5 533.25,13 540.00,0.5 546.75,13 553.50,0.5 560.25,13 567.00,0.5 573.75,13 580.50,0.5 587.25,13 594.00,0.5 594.5,0" fill="#fff"/><polyline points="0.5,0.5 6.75,13 13.50,0.5 20.25,13 27.00,0.5 33.75,13 40.50,0.5 47.25,13 54.00,0.5 60.75,13 67.50,0.5 74.25,13 81.00,0.5 87.75,13 94.50,0.5 101.25,13 108.00,0.5 114.75,13 121.50,0.5 128.25,13 135.00,0.5 141.75,13 148.50,0.5 155.25,13 162.00,0.5 168.75,13 175.50,0.5 182.25,13 189.00,0.5 195.75,13 202.50,0.5 209.25,13 216.00,0.5 222.75,13 229.50,0.5 236.25,13 243.00,0.5 249.75,13 256.50,0.5 263.25,13 270.00,0.5 276.75,13 283.50,0.5 290.25,13 297.00,0.5 303.75,13 310.50,0.5 317.25,13 324.00,0.5 330.75,13 337.50,0.5 344.25,13 351.00,0.5 357.75,13 364.50,0.5 371.25,13 378.00,0.5 384.75,13 391.50,0.5 398.25,13 405.00,0.5 411.75,13 418.50,0.5 425.25,13 432.00,0.5 438.75,13 445.50,0.5 452.25,13 459.00,0.5 465.75,13 472.50,0.5 479.25,13 486.00,0.5 492.75,13 499.50,0.5 506.25,13 513.00,0.5 519.75,13 526.50,0.5 533.25,13 540.00,0.5 546.75,13 553.50,0.5 560.25,13 567.00,0.5 573.75,13 580.50,0.5 587.25,13 594.00,0.5" fill="none" stroke="#d2d4d8" stroke-width="1.5"/></svg>
<svg class="a" style="left:1454px;top:558px" width="40" height="42" viewBox="0 0 40 42"><path d="M35 0 L39 4 H35 Z" fill="#b8581a"/><path d="M0 0 H35 V41 L17.5 28 L0 41 Z" fill="#f27f2c"/></svg>
<div class="t" style="left:1454px;top:563px;width:35px;text-align:center;font-size:15px;color:#fff;-webkit-text-stroke:0.2px #fff">前科</div>
<div class="a" style="left:918px;top:589px;width:48px;height:16px;border:1px solid #f0a646;border-left:4px solid #f0a646;background:#fff"></div>
<div class="t" style="left:920px;top:587px;width:46px;text-align:center;font-size:15px;color:#f0a646;line-height:20px">220</div>
<div class="a" style="left:972px;top:589px;width:48px;height:16px;border:1px solid #3f86e0;border-left:4px solid #3f86e0;background:#fff"></div>
<div class="t" style="left:974px;top:587px;width:46px;text-align:center;font-size:15px;color:#3f86e0;line-height:20px">1</div>
<div class="a" style="left:918px;top:617px;width:102px;height:103px;border-radius:7px;overflow:hidden"><svg width="102" height="103" viewBox="0 0 102 103"><defs><linearGradient id="g2" x1="0" y1="0" x2="1" y2="1"><stop offset="0" stop-color="#7ea868"/><stop offset=".5" stop-color="#4f7e44"/><stop offset="1" stop-color="#6a9258"/></linearGradient></defs><rect width="102" height="103" fill="url(#g2)"/><ellipse cx="12" cy="45" rx="14" ry="20" fill="#5d8a4c"/><ellipse cx="10" cy="85" rx="14" ry="12" fill="#8a968a" opacity=".7"/><ellipse cx="92" cy="40" rx="12" ry="25" fill="#86ae70" opacity=".8"/><path d="M28 48 Q26 6 56 3 Q84 5 86 42 L82 62 L30 62 Z" fill="#2c2420"/><path d="M40 75 H70 L72 103 H38 Z" fill="#dcb49a"/><ellipse cx="56" cy="50" rx="25" ry="33" fill="#e2b89e"/><path d="M31 40 Q32 15 56 15 Q80 16 81 38 Q74 24 56 23 Q40 24 31 40 Z" fill="#2c2420"/><path d="M39 42 Q45 40 51 42 M61 42 Q67 40 73 42" stroke="#3a2824" stroke-width="1.6" fill="none"/><ellipse cx="45" cy="47" rx="3.5" ry="1.6" fill="#3a2824"/><ellipse cx="67" cy="47" rx="3.5" ry="1.6" fill="#3a2824"/><path d="M52 62 Q55 64 58 62" stroke="#b88a70" stroke-width="1.4" fill="none"/><path d="M49 73 Q55 70 61 73" stroke="#b86a60" stroke-width="2.4" fill="none"/><path d="M0 103 L4 96 Q20 88 38 92 L40 103 Z" fill="#e8d8d4"/><path d="M70 92 Q86 88 100 95 L102 103 H68 Z" fill="#e8d8d4"/><path d="M12 103 L22 92 L28 103 Z M80 103 L86 92 L96 103 Z" fill="#c44040"/><path d="M31 70 Q25 88 31 103" stroke="#2c2420" stroke-width="7" fill="none"/></svg></div>
<div class="t" style="left:918px;top:729px;width:102px;text-align:center;font-size:20px;line-height:24px;color:#2a2a2a">赵四方</div>
<svg class="a" style="left:1049px;top:592px" width="21" height="15" viewBox="0 0 21 15"><rect width="21" height="15" rx="1.5" fill="#2b73b6"/><circle cx="6.5" cy="5.5" r="2.6" fill="#fff"/><path d="M2.5 12 Q2.5 8.5 6.5 8.5 Q10.5 8.5 10.5 12 Z" fill="#fff"/><path d="M12.5 4.5 H18.5 M12.5 7.5 H18.5 M12.5 10.5 H18.5" stroke="#fff" stroke-width="1.4"/></svg>
<svg class="a" style="left:1050px;top:629px" width="17" height="18" viewBox="0 0 17 18"><path d="M8.5 14 L4 8.5 A5.7 5.7 0 1 1 13 8.5 Z" fill="#6458d8"/><circle cx="8.5" cy="5.8" r="2.3" fill="#fff"/><path d="M1 16.5 Q1 13.5 5 13.2 L8.5 16 L12 13.2 Q16 13.5 16 16.5 Z" fill="#6458d8"/></svg>
<svg class="a" style="left:1050px;top:669px" width="17" height="17" viewBox="0 0 17 17"><path d="M8.5 0.5 L16.5 8 H13.5 V16.5 H3.5 V8 H0.5 Z" fill="#2fa866"/><circle cx="8.5" cy="9" r="1.8" fill="#fff"/><path d="M5.7 14 Q5.7 11.3 8.5 11.3 Q11.3 11.3 11.3 14 Z" fill="#fff"/></svg>
<svg class="a" style="left:1050px;top:702px" width="18" height="18" viewBox="0 0 18 18"><path d="M2.2 7 A7 7 0 0 1 15 5" stroke="#5a7ac8" stroke-width="1.8" fill="none"/><path d="M15.8 11 A7 7 0 0 1 3 13" stroke="#5a7ac8" stroke-width="1.8" fill="none"/><path d="M16.5 2.5 L16 7 L12 5.5 Z M1.5 15.5 L2 11 L6 12.5 Z" fill="#5a7ac8"/><path d="M9 5.5 V9 L11 10.5" stroke="#5a7ac8" stroke-width="1.4" fill="none"/></svg>
<div class="t" style="left:1084px;top:590px;font-size:15px;color:#777;letter-spacing:4.3px">身份证</div>
<div class="t" style="left:1084px;top:630px;font-size:15px;color:#777;letter-spacing:4.3px">管辖地</div>
<div class="t" style="left:1084px;top:668px;font-size:15px;color:#777;letter-spacing:4.3px">户籍地</div>
<div class="t" style="left:1084px;top:701px;font-size:15px;color:#777;letter-spacing:-0.3px">动态信息</div>
<div class="t" style="left:1143px;top:590px;font-size:15px;color:#777">：</div>
<div class="t" style="left:1143px;top:630px;font-size:15px;color:#777">：</div>
<div class="t" style="left:1143px;top:668px;font-size:15px;color:#777">：</div>
<div class="t" style="left:1143px;top:701px;font-size:15px;color:#777">：</div>
<div class="t" style="left:1156px;top:591px;font-size:16px;letter-spacing:-0.45px;color:#1e1e1e;-webkit-text-stroke:0.2px #1e1e1e">1502021961103081258</div>
<div class="t" style="left:1156px;top:631px;font-size:15px;letter-spacing:-0.6px;color:#1e1e1e;-webkit-text-stroke:0.25px #1e1e1e">包头市青山区分局光辉小区派出所</div>
<div class="t" style="left:1156px;top:669px;font-size:15px;letter-spacing:-0.6px;color:#1e1e1e;-webkit-text-stroke:0.25px #1e1e1e">内蒙古自治区包头市青山区光辉小区<span style="margin-left:-3px;margin-right:3px">（</span>二区<span style="margin-left:3px;margin-right:-2px">）</span><span style="font-size:16px;letter-spacing:0.4px">1-89</span></div>
<div class="t" style="left:1156px;top:702px;font-size:15.3px;color:#1e1e1e;white-space:pre;-webkit-text-stroke:0.2px #1e1e1e">2016-04-14  09：16：36</div>
<div class="t" style="left:1156px;top:724px;font-size:15px;letter-spacing:-0.6px;color:#1e1e1e;-webkit-text-stroke:0.25px #1e1e1e">乘坐火车去往呼和浩特</div>
<div class="a" style="left:1373px;top:719px;width:104px;height:31px;background:#4e9de2"></div>
<svg class="a" style="left:1383px;top:725px" width="24" height="20" viewBox="0 0 24 20"><circle cx="8" cy="6" r="4.5" stroke="#fff" stroke-width="1.8" fill="none"/><path d="M1.5 18 Q1.5 11 8 11 Q11 11 12.5 12.5" stroke="#fff" stroke-width="1.8" fill="none"/><path d="M12 15 L15 18 L22 10" stroke="#fff" stroke-width="1.8" fill="none"/></svg>
<div class="t" style="left:1407px;top:725px;font-size:15px;color:#fff">人工研判</div>
<div class="a" style="left:283px;top:808px;width:595px;height:207px;background:#fff;border:1px solid #cfd3da;border-bottom:none"></div>
<svg class="a" style="left:283px;top:1014px" width="596" height="15" viewBox="0 0 596 15"><polygon points="0.5,0 0.5,0.5 6.75,13 13.50,0.5 20.25,13 27.00,0.5 33.75,13 40.50,0.5 47.25,13 54.00,0.5 60.75,13 67.50,0.5 74.25,13 81.00,0.5 87.75,13 94.50,0.5 101.25,13 108.00,0.5 114.75,13 121.50,0.5 128.25,13 135.00,0.5 141.75,13 148.50,0.5 155.25,13 162.00,0.5 168.75,13 175.50,0.5 182.25,13 189.00,0.5 195.75,13 202.50,0.5 209.25,13 216.00,0.5 222.75,13 229.50,0.5 236.25,13 243.00,0.5 249.75,13 256.50,0.5 263.25,13 270.00,0.5 276.75,13 283.50,0.5 290.25,13 297.00,0.5 303.75,13 310.50,0.5 317.25,13 324.00,0.5 330.75,13 337.50,0.5 344.25,13 351.00,0.5 357.75,13 364.50,0.5 371.25,13 378.00,0.5 384.75,13 391.50,0.5 398.25,13 405.00,0.5 411.75,13 418.50,0.5 425.25,13 432.00,0.5 438.75,13 445.50,0.5 452.25,13 459.00,0.5 465.75,13 472.50,0.5 479.25,13 486.00,0.5 492.75,13 499.50,0.5 506.25,13 513.00,0.5 519.75,13 526.50,0.5 533.25,13 540.00,0.5 546.75,13 553.50,0.5 560.25,13 567.00,0.5 573.75,13 580.50,0.5 587.25,13 594.00,0.5 594.5,0" fill="#fff"/><polyline points="0.5,0.5 6.75,13 13.50,0.5 20.25,13 27.00,0.5 33.75,13 40.50,0.5 47.25,13 54.00,0.5 60.75,13 67.50,0.5 74.25,13 81.00,0.5 87.75,13 94.50,0.5 101.25,13 108.00,0.5 114.75,13 121.50,0.5 128.25,13 135.00,0.5 141.75,13 148.50,0.5 155.25,13 162.00,0.5 168.75,13 175.50,0.5 182.25,13 189.00,0.5 195.75,13 202.50,0.5 209.25,13 216.00,0.5 222.75,13 229.50,0.5 236.25,13 243.00,0.5 249.75,13 256.50,0.5 263.25,13 270.00,0.5 276.75,13 283.50,0.5 290.25,13 297.00,0.5 303.75,13 310.50,0.5 317.25,13 324.00,0.5 330.75,13 337.50,0.5 344.25,13 351.00,0.5 357.75,13 364.50,0.5 371.25,13 378.00,0.5 384.75,13 391.50,0.5 398.25,13 405.00,0.5 411.75,13 418.50,0.5 425.25,13 432.00,0.5 438.75,13 445.50,0.5 452.25,13 459.00,0.5 465.75,13 472.50,0.5 479.25,13 486.00,0.5 492.75,13 499.50,0.5 506.25,13 513.00,0.5 519.75,13 526.50,0.5 533.25,13 540.00,0.5 546.75,13 553.50,0.5 560.25,13 567.00,0.5 573.75,13 580.50,0.5 587.25,13 594.00,0.5" fill="none" stroke="#d2d4d8" stroke-width="1.5"/></svg>
<svg class="a" style="left:834px;top:804px" width="40" height="42" viewBox="0 0 40 42"><path d="M35 0 L39 4 H35 Z" fill="#b8581a"/><path d="M0 0 H35 V41 L17.5 28 L0 41 Z" fill="#f27f2c"/></svg>
<div class="t" style="left:834px;top:809px;width:35px;text-align:center;font-size:15px;color:#fff;-webkit-text-stroke:0.2px #fff">前科</div>
<div class="a" style="left:298px;top:835.5px;width:48px;height:16px;border:1px solid #f0a646;border-left:4px solid #f0a646;background:#fff"></div>
<div class="t" style="left:300px;top:833.5px;width:46px;text-align:center;font-size:15px;color:#f0a646;line-height:20px">220</div>
<div class="a" style="left:352px;top:835.5px;width:48px;height:16px;border:1px solid #f06650;border-left:4px solid #f06650;background:#fff"></div>
<div class="t" style="left:354px;top:833.5px;width:46px;text-align:center;font-size:15px;color:#f06650;line-height:20px">1</div>
<div class="a" style="left:298px;top:863.5px;width:102px;height:103px;border-radius:7px;overflow:hidden"><svg width="102" height="103" viewBox="0 0 102 103"><rect width="102" height="103" fill="#e4e4e0"/><rect x="62" y="5" width="14" height="22" fill="#c8bca8"/><rect x="40" y="23" width="46" height="6" fill="#2a2a2a"/><rect x="44" y="29" width="3" height="20" fill="#2a2a2a"/><path d="M64 103 L66 46 Q72 36 88 34 Q100 36 102 40 V103 Z" fill="#8ea4c4"/><path d="M70 40 L80 48 L76 52 Z" fill="#2a3040"/><ellipse cx="92" cy="20" rx="10" ry="13" fill="#c08a68"/><path d="M82 14 Q84 2 94 2 Q102 4 102 12 Q96 8 88 10 Z" fill="#1a1a1a"/><path d="M0 45 Q8 44 12 52 L14 103 H0 Z" fill="#8aa8d0"/><path d="M12 72 L30 60 L32 66 L16 80 Z" fill="#b88868"/><path d="M20 103 L26 50 Q34 42 50 42 Q64 44 72 50 L74 103 Z" fill="#e8741e"/><path d="M40 44 L50 58 L60 44 L58 103 H42 Z" fill="#1c1c1c"/><ellipse cx="52" cy="24" rx="11" ry="14" fill="#c49474"/><path d="M41 20 Q42 8 52 8 Q63 8 63 20 Q60 14 52 14 Q44 14 41 20 Z" fill="#141414"/><path d="M60 54 Q66 50 72 54 L86 64 L84 72 L68 62 Z" fill="#c49474"/></svg></div>
<div class="t" style="left:298px;top:975.5px;width:102px;text-align:center;font-size:20px;line-height:24px;color:#2a2a2a">赵四方</div>
<svg class="a" style="left:429px;top:838.5px" width="21" height="15" viewBox="0 0 21 15"><rect width="21" height="15" rx="1.5" fill="#2b73b6"/><circle cx="6.5" cy="5.5" r="2.6" fill="#fff"/><path d="M2.5 12 Q2.5 8.5 6.5 8.5 Q10.5 8.5 10.5 12 Z" fill="#fff"/><path d="M12.5 4.5 H18.5 M12.5 7.5 H18.5 M12.5 10.5 H18.5" stroke="#fff" stroke-width="1.4"/></svg>
<svg class="a" style="left:430px;top:875.5px" width="17" height="18" viewBox="0 0 17 18"><path d="M8.5 14 L4 8.5 A5.7 5.7 0 1 1 13 8.5 Z" fill="#6458d8"/><circle cx="8.5" cy="5.8" r="2.3" fill="#fff"/><path d="M1 16.5 Q1 13.5 5 13.2 L8.5 16 L12 13.2 Q16 13.5 16 16.5 Z" fill="#6458d8"/></svg>
<svg class="a" style="left:430px;top:915.5px" width="17" height="17" viewBox="0 0 17 17"><path d="M8.5 0.5 L16.5 8 H13.5 V16.5 H3.5 V8 H0.5 Z" fill="#2fa866"/><circle cx="8.5" cy="9" r="1.8" fill="#fff"/><path d="M5.7 14 Q5.7 11.3 8.5 11.3 Q11.3 11.3 11.3 14 Z" fill="#fff"/></svg>
<svg class="a" style="left:430px;top:948.5px" width="18" height="18" viewBox="0 0 18 18"><path d="M2.2 7 A7 7 0 0 1 15 5" stroke="#5a7ac8" stroke-width="1.8" fill="none"/><path d="M15.8 11 A7 7 0 0 1 3 13" stroke="#5a7ac8" stroke-width="1.8" fill="none"/><path d="M16.5 2.5 L16 7 L12 5.5 Z M1.5 15.5 L2 11 L6 12.5 Z" fill="#5a7ac8"/><path d="M9 5.5 V9 L11 10.5" stroke="#5a7ac8" stroke-width="1.4" fill="none"/></svg>
<div class="t" style="left:464px;top:836.5px;font-size:15px;color:#777;letter-spacing:4.3px">身份证</div>
<div class="t" style="left:464px;top:876.5px;font-size:15px;color:#777;letter-spacing:4.3px">管辖地</div>
<div class="t" style="left:464px;top:914.5px;font-size:15px;color:#777;letter-spacing:4.3px">户籍地</div>
<div class="t" style="left:464px;top:947.5px;font-size:15px;color:#777;letter-spacing:-0.3px">动态信息</div>
<div class="t" style="left:523px;top:836.5px;font-size:15px;color:#777">：</div>
<div class="t" style="left:523px;top:876.5px;font-size:15px;color:#777">：</div>
<div class="t" style="left:523px;top:914.5px;font-size:15px;color:#777">：</div>
<div class="t" style="left:523px;top:947.5px;font-size:15px;color:#777">：</div>
<div class="t" style="left:536px;top:837.5px;font-size:16px;letter-spacing:-0.45px;color:#1e1e1e;-webkit-text-stroke:0.2px #1e1e1e">1502021961103081258</div>
<div class="t" style="left:536px;top:877.5px;font-size:15px;letter-spacing:-0.6px;color:#1e1e1e;-webkit-text-stroke:0.25px #1e1e1e">包头市青山区分局光辉小区派出所</div>
<div class="t" style="left:536px;top:915.5px;font-size:15px;letter-spacing:-0.6px;color:#1e1e1e;-webkit-text-stroke:0.25px #1e1e1e">内蒙古自治区包头市青山区光辉小区<span style="margin-left:-3px;margin-right:3px">（</span>二区<span style="margin-left:3px;margin-right:-2px">）</span><span style="font-size:16px;letter-spacing:0.4px">1-89</span></div>
<div class="t" style="left:536px;top:948.5px;font-size:15.3px;color:#1e1e1e;white-space:pre;-webkit-text-stroke:0.2px #1e1e1e">2016-04-14  09：16：36</div>
<div class="t" style="left:536px;top:970.5px;font-size:15px;letter-spacing:-0.6px;color:#1e1e1e;-webkit-text-stroke:0.25px #1e1e1e">乘坐火车去往呼和浩特</div>
<div class="a" style="left:753px;top:965.5px;width:104px;height:31px;background:#6e7f9b"></div>
<svg class="a" style="left:763px;top:971.5px" width="24" height="20" viewBox="0 0 24 20"><circle cx="8" cy="6" r="4.5" stroke="#fff" stroke-width="1.8" fill="none"/><path d="M1.5 18 Q1.5 11 8 11 Q11 11 12.5 12.5" stroke="#fff" stroke-width="1.8" fill="none"/><path d="M12 15 L15 18 L22 10" stroke="#fff" stroke-width="1.8" fill="none"/></svg>
<div class="t" style="left:787px;top:971.5px;font-size:15px;color:#fff">人工研判</div>
<div class="a" style="left:903px;top:808px;width:595px;height:207px;background:#fff;border:1px solid #cfd3da;border-bottom:none"></div>
<svg class="a" style="left:903px;top:1014px" width="596" height="15" viewBox="0 0 596 15"><polygon points="0.5,0 0.5,0.5 6.75,13 13.50,0.5 20.25,13 27.00,0.5 33.75,13 40.50,0.5 47.25,13 54.00,0.5 60.75,13 67.50,0.5 74.25,13 81.00,0.5 87.75,13 94.50,0.5 101.25,13 108.00,0.5 114.75,13 121.50,0.5 128.25,13 135.00,0.5 141.75,13 148.50,0.5 155.25,13 162.00,0.5 168.75,13 175.50,0.5 182.25,13 189.00,0.5 195.75,13 202.50,0.5 209.25,13 216.00,0.5 222.75,13 229.50,0.5 236.25,13 243.00,0.5 249.75,13 256.50,0.5 263.25,13 270.00,0.5 276.75,13 283.50,0.5 290.25,13 297.00,0.5 303.75,13 310.50,0.5 317.25,13 324.00,0.5 330.75,13 337.50,0.5 344.25,13 351.00,0.5 357.75,13 364.50,0.5 371.25,13 378.00,0.5 384.75,13 391.50,0.5 398.25,13 405.00,0.5 411.75,13 418.50,0.5 425.25,13 432.00,0.5 438.75,13 445.50,0.5 452.25,13 459.00,0.5 465.75,13 472.50,0.5 479.25,13 486.00,0.5 492.75,13 499.50,0.5 506.25,13 513.00,0.5 519.75,13 526.50,0.5 533.25,13 540.00,0.5 546.75,13 553.50,0.5 560.25,13 567.00,0.5 573.75,13 580.50,0.5 587.25,13 594.00,0.5 594.5,0" fill="#fff"/><polyline points="0.5,0.5 6.75,13 13.50,0.5 20.25,13 27.00,0.5 33.75,13 40.50,0.5 47.25,13 54.00,0.5 60.75,13 67.50,0.5 74.25,13 81.00,0.5 87.75,13 94.50,0.5 101.25,13 108.00,0.5 114.75,13 121.50,0.5 128.25,13 135.00,0.5 141.75,13 148.50,0.5 155.25,13 162.00,0.5 168.75,13 175.50,0.5 182.25,13 189.00,0.5 195.75,13 202.50,0.5 209.25,13 216.00,0.5 222.75,13 229.50,0.5 236.25,13 243.00,0.5 249.75,13 256.50,0.5 263.25,13 270.00,0.5 276.75,13 283.50,0.5 290.25,13 297.00,0.5 303.75,13 310.50,0.5 317.25,13 324.00,0.5 330.75,13 337.50,0.5 344.25,13 351.00,0.5 357.75,13 364.50,0.5 371.25,13 378.00,0.5 384.75,13 391.50,0.5 398.25,13 405.00,0.5 411.75,13 418.50,0.5 425.25,13 432.00,0.5 438.75,13 445.50,0.5 452.25,13 459.00,0.5 465.75,13 472.50,0.5 479.25,13 486.00,0.5 492.75,13 499.50,0.5 506.25,13 513.00,0.5 519.75,13 526.50,0.5 533.25,13 540.00,0.5 546.75,13 553.50,0.5 560.25,13 567.00,0.5 573.75,13 580.50,0.5 587.25,13 594.00,0.5" fill="none" stroke="#d2d4d8" stroke-width="1.5"/></svg>
<svg class="a" style="left:1454px;top:804px" width="40" height="42" viewBox="0 0 40 42"><path d="M35 0 L39 4 H35 Z" fill="#b8581a"/><path d="M0 0 H35 V41 L17.5 28 L0 41 Z" fill="#f27f2c"/></svg>
<div class="t" style="left:1454px;top:809px;width:35px;text-align:center;font-size:15px;color:#fff;-webkit-text-stroke:0.2px #fff">前科</div>
<div class="a" style="left:918px;top:835.5px;width:48px;height:16px;border:1px solid #f0a646;border-left:4px solid #f0a646;background:#fff"></div>
<div class="t" style="left:920px;top:833.5px;width:46px;text-align:center;font-size:15px;color:#f0a646;line-height:20px">220</div>
<div class="a" style="left:972px;top:835.5px;width:48px;height:16px;border:1px solid #3f86e0;border-left:4px solid #3f86e0;background:#fff"></div>
<div class="t" style="left:974px;top:833.5px;width:46px;text-align:center;font-size:15px;color:#3f86e0;line-height:20px">1</div>
<div class="a" style="left:918px;top:863.5px;width:102px;height:103px;border-radius:7px;overflow:hidden"><svg width="102" height="103" viewBox="0 0 102 103"><rect width="102" height="103" fill="#d2b12a"/><rect x="0" width="34" height="103" fill="#cfae2c"/><rect x="34" width="1.5" height="103" fill="#a88a18"/><rect x="96" width="6" height="103" fill="#e8e8ea"/><path d="M8 103 Q12 60 36 52 L66 52 Q88 60 92 103 Z" fill="#222228"/><path d="M44 54 Q51 62 58 54 Z" fill="#8a6044"/><path d="M44 72 L52 66 L58 74 L66 68 L74 80 L70 103 H42 L40 90 Z" fill="#e3c81e"/><circle cx="47" cy="68" r="4" fill="#3a6ad8"/><circle cx="62" cy="66" r="3.6" fill="#3a6ad8"/><ellipse cx="49" cy="30" rx="15" ry="20" fill="#94704e"/><path d="M34 30 Q33 6 50 6 Q67 6 65 30 Q62 16 50 16 Q38 16 34 30 Z" fill="#1c1c1c"/><rect x="35" y="25" width="22" height="7" fill="#0c0c0c"/><path d="M45 42 Q49 44 53 42" stroke="#a86a6a" stroke-width="1.6" fill="none"/></svg></div>
<div class="t" style="left:918px;top:975.5px;width:102px;text-align:center;font-size:20px;line-height:24px;color:#2a2a2a">赵四方</div>
<svg class="a" style="left:1049px;top:838.5px" width="21" height="15" viewBox="0 0 21 15"><rect width="21" height="15" rx="1.5" fill="#2b73b6"/><circle cx="6.5" cy="5.5" r="2.6" fill="#fff"/><path d="M2.5 12 Q2.5 8.5 6.5 8.5 Q10.5 8.5 10.5 12 Z" fill="#fff"/><path d="M12.5 4.5 H18.5 M12.5 7.5 H18.5 M12.5 10.5 H18.5" stroke="#fff" stroke-width="1.4"/></svg>
<svg class="a" style="left:1050px;top:875.5px" width="17" height="18" viewBox="0 0 17 18"><path d="M8.5 14 L4 8.5 A5.7 5.7 0 1 1 13 8.5 Z" fill="#6458d8"/><circle cx="8.5" cy="5.8" r="2.3" fill="#fff"/><path d="M1 16.5 Q1 13.5 5 13.2 L8.5 16 L12 13.2 Q16 13.5 16 16.5 Z" fill="#6458d8"/></svg>
<svg class="a" style="left:1050px;top:915.5px" width="17" height="17" viewBox="0 0 17 17"><path d="M8.5 0.5 L16.5 8 H13.5 V16.5 H3.5 V8 H0.5 Z" fill="#2fa866"/><circle cx="8.5" cy="9" r="1.8" fill="#fff"/><path d="M5.7 14 Q5.7 11.3 8.5 11.3 Q11.3 11.3 11.3 14 Z" fill="#fff"/></svg>
<svg class="a" style="left:1050px;top:948.5px" width="18" height="18" viewBox="0 0 18 18"><path d="M2.2 7 A7 7 0 0 1 15 5" stroke="#5a7ac8" stroke-width="1.8" fill="none"/><path d="M15.8 11 A7 7 0 0 1 3 13" stroke="#5a7ac8" stroke-width="1.8" fill="none"/><path d="M16.5 2.5 L16 7 L12 5.5 Z M1.5 15.5 L2 11 L6 12.5 Z" fill="#5a7ac8"/><path d="M9 5.5 V9 L11 10.5" stroke="#5a7ac8" stroke-width="1.4" fill="none"/></svg>
<div class="t" style="left:1084px;top:836.5px;font-size:15px;color:#777;letter-spacing:4.3px">身份证</div>
<div class="t" style="left:1084px;top:876.5px;font-size:15px;color:#777;letter-spacing:4.3px">管辖地</div>
<div class="t" style="left:1084px;top:914.5px;font-size:15px;color:#777;letter-spacing:4.3px">户籍地</div>
<div class="t" style="left:1084px;top:947.5px;font-size:15px;color:#777;letter-spacing:-0.3px">动态信息</div>
<div class="t" style="left:1143px;top:836.5px;font-size:15px;color:#777">：</div>
<div class="t" style="left:1143px;top:876.5px;font-size:15px;color:#777">：</div>
<div class="t" style="left:1143px;top:914.5px;font-size:15px;color:#777">：</div>
<div class="t" style="left:1143px;top:947.5px;font-size:15px;color:#777">：</div>
<div class="t" style="left:1156px;top:837.5px;font-size:16px;letter-spacing:-0.45px;color:#1e1e1e;-webkit-text-stroke:0.2px #1e1e1e">1502021961103081258</div>
<div class="t" style="left:1156px;top:877.5px;font-size:15px;letter-spacing:-0.6px;color:#1e1e1e;-webkit-text-stroke:0.25px #1e1e1e">包头市青山区分局光辉小区派出所</div>
<div class="t" style="left:1156px;top:915.5px;font-size:15px;letter-spacing:-0.6px;color:#1e1e1e;-webkit-text-stroke:0.25px #1e1e1e">内蒙古自治区包头市青山区光辉小区<span style="margin-left:-3px;margin-right:3px">（</span>二区<span style="margin-left:3px;margin-right:-2px">）</span><span style="font-size:16px;letter-spacing:0.4px">1-89</span></div>
<div class="t" style="left:1156px;top:948.5px;font-size:15.3px;color:#1e1e1e;white-space:pre;-webkit-text-stroke:0.2px #1e1e1e">2016-04-14  09：16：36</div>
<div class="t" style="left:1156px;top:970.5px;font-size:15px;letter-spacing:-0.6px;color:#1e1e1e;-webkit-text-stroke:0.25px #1e1e1e">乘坐火车去往呼和浩特</div>
<div class="a" style="left:1373px;top:965.5px;width:104px;height:31px;background:#4e9de2"></div>
<svg class="a" style="left:1383px;top:971.5px" width="24" height="20" viewBox="0 0 24 20"><circle cx="8" cy="6" r="4.5" stroke="#fff" stroke-width="1.8" fill="none"/><path d="M1.5 18 Q1.5 11 8 11 Q11 11 12.5 12.5" stroke="#fff" stroke-width="1.8" fill="none"/><path d="M12 15 L15 18 L22 10" stroke="#fff" stroke-width="1.8" fill="none"/></svg>
<div class="t" style="left:1407px;top:971.5px;font-size:15px;color:#fff">人工研判</div>

<!-- ribbon -->
<svg class="a" style="left:1150px;top:0" width="394" height="400" viewBox="1150 0 394 400"><polygon points="1199,0 1329,0 1544,208 1544,345" fill="#199cd6"/></svg>
<div class="t" style="left:1305.5px;top:80px;width:200px;height:100px;line-height:100px;text-align:center;font-size:53px;color:#fff;-webkit-text-stroke:0.6px #199cd6;transform:rotate(45deg);transform-origin:50% 50%">psd</div>

</body></html>
